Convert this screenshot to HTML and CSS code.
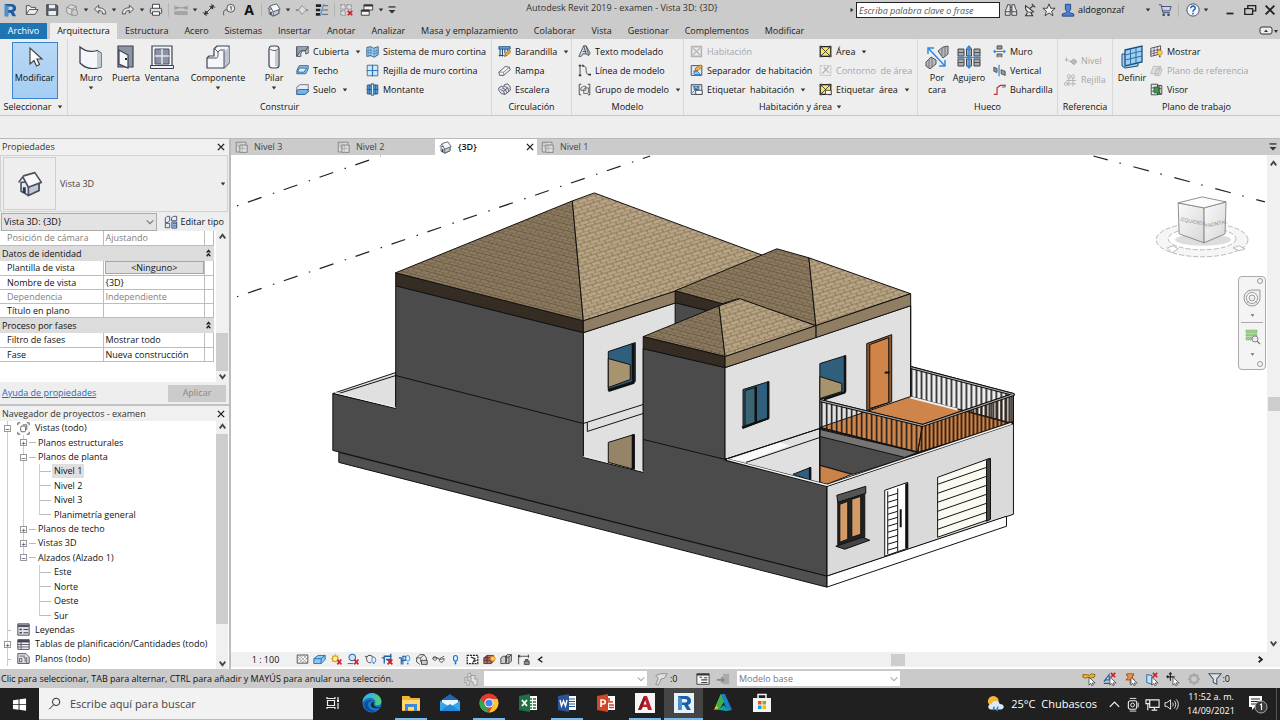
FILE: index.html
```html
<!DOCTYPE html>
<html lang="es">
<head>
<meta charset="utf-8">
<title>Autodesk Revit 2019 - examen - Vista 3D: {3D}</title>
<link rel="stylesheet" href="styles.css">
</head>
<body>
<svg class="sprites" aria-hidden="true">
  <defs>
    <symbol id="logo-r" viewBox="0 0 16 16"><path d="M2 1h7c4 0 6 2 6 5 0 2-1 3.500-3 4l3 5h-4L8.500 11H6v4H2z" fill="#1b5ea6"/><path d="M6 4h3c3 0 3 4 0 4H6z" fill="#cbcbcb"/><path d="M2 1l4 3v11H2z" fill="#4a8fd0"/></symbol>
    <symbol id="open" viewBox="0 0 16 16"><path d="M1.500 13V3h4l1.500 2h5v2.500M1.500 13L5 7.500h10L11.500 13z" fill="#eee" stroke="#444"/></symbol>
    <symbol id="save" viewBox="0 0 16 16"><path d="M2 2h11l1.500 1.500V14H2z" fill="#5a6472" stroke="#333"/><path d="M4.500 2h7v4h-7zM4 9h8.500v5H4z" fill="#eee"/></symbol>
    <symbol id="cube" viewBox="0 0 16 16"><path d="M2 5l5-3 6 2v7l-5 3-6-3z" fill="#ddd" stroke="#888"/><path d="M2 5l6 2 5-3M8 7v7" fill="none" stroke="#888"/><circle cx="11" cy="11" r="3.500" fill="#ccc" stroke="#888"/></symbol>
    <symbol id="undo" viewBox="0 0 16 16"><path d="M1.500 7L6.500 2.500v3c5 0 8 2 8 7H11c0-3-1.500-4-4.500-4v3z" fill="#e6e6e6" stroke="#444"/></symbol>
    <symbol id="redo" viewBox="0 0 16 16"><path d="M14.500 7L9.500 2.500v3c-5 0-8 2-8 7H5c0-3 1.500-4 4.500-4v3z" fill="#e6e6e6" stroke="#444"/></symbol>
    <symbol id="print" viewBox="0 0 16 16"><path d="M4 6V1.500h8V6" fill="#fff" stroke="#333"/><rect x="1.500" y="6" width="13" height="6" rx="1.500" fill="#dde" stroke="#333"/><path d="M4 10h8v4H4z" fill="#fff" stroke="#333"/></symbol>
    <symbol id="measure" viewBox="0 0 16 16"><path d="M1 3v5M15 3v5M2 5.500h12M4 4L2 5.500 4 7M12 4l2 1.500L12 7" fill="none" stroke="#888"/><path d="M1 10h14v3H1z" fill="#aaa" stroke="#999"/></symbol>
    <symbol id="dim" viewBox="0 0 16 16"><path d="M3 13L13 3M1 10.500L5.500 15M10.500 1L15 5.500M3 13l1-4 3 3zM13 3l-1 4-3-3z" fill="#333" stroke="#333"/></symbol>
    <symbol id="tag" viewBox="0 0 16 16"><circle cx="10" cy="6" r="4.500" fill="#eee" stroke="#444"/><path d="M2 14c-1-5 1-7 3.500-6M9 5l1.500-1v4.500" fill="none" stroke="#444"/></symbol>
    <symbol id="house" viewBox="0 0 16 16"><path d="M2.500 7v5.500L7 15l6.500-3V6z" fill="#e8ebf2" stroke="#4a5260"/><path d="M7 9.500V15l6.500-3V7z" fill="#c3c9d6" stroke="#4a5260"/><path d="M1 7l3-4 7-2 4 6-8 3-3.500-6.500" fill="#f8f8fb" stroke="#4a5260" stroke-linejoin="round"/><path d="M4.500 10v3.500" stroke="#2c3644" stroke-width="1.800"/></symbol>
    <symbol id="section" viewBox="0 0 16 16"><path d="M1 8h3M12 8h3" stroke="#888" stroke-width="2"/><path d="M8 3l5 5-5 5-4-5z" fill="#ddd" stroke="#888"/></symbol>
    <symbol id="thin" viewBox="0 0 16 16"><path d="M1 3h6M1 8h5M1 13h5" stroke="#222" stroke-width="3"/><path d="M9 3h6M8 8h7M8 13h7" stroke="#555"/><path d="M10 1L6 15" stroke="#4b9be0" stroke-width="1.500"/></symbol>
    <symbol id="closewin" viewBox="0 0 16 16"><path d="M1 2h5v5H1zM8 2h5v5H8zM1 9h5v5H1z" fill="#ddd" stroke="#777" stroke-dasharray="2 1"/><path d="M9 9l5 5M14 9l-5 5" stroke="#c8202c" stroke-width="2"/></symbol>
    <symbol id="switch" viewBox="0 0 16 16"><path d="M4.500 2h10v6h-10zM1.500 8h9v6h-9z" fill="#f4f4f4" stroke="#333"/><path d="M4.500 3h10M1.500 9h9" stroke="#333" stroke-width="2"/></symbol>
    <symbol id="custom" viewBox="0 0 16 16"><path d="M4 4.500h8" stroke="#333" stroke-width="1.500"/><path d="M4 8h8l-4 4z" fill="#333"/></symbol>
    <symbol id="tri" viewBox="0 0 8 8"><path d="M1 2h6L4 6z" fill="#333"/></symbol>
    <symbol id="binoc" viewBox="0 0 16 16"><path d="M3 6l1-4h3v12H1.500V9zM13 6l-1-4H9v12h5.500V9z" fill="#e4e8ee" stroke="#333"/><path d="M7 5h2M7 8h2M2 10h5M9 10h5" stroke="#333"/></symbol>
    <symbol id="dish" viewBox="0 0 16 16"><path d="M3 3c-1 6 3 9 9 7z" fill="#f4f4f4" stroke="#333" stroke-width="1.200"/><path d="M8 6l4-3M10 1l4 4M5 11l-2 3.500h8L9 11" fill="#ddd" stroke="#333" stroke-width="1.200"/></symbol>
    <symbol id="star" viewBox="0 0 16 16"><path d="M8 1l2 5h5l-4 3.500 1.500 5L8 11.500l-4.500 3 1.500-5L1 6h5z" fill="#eee" stroke="#333"/></symbol>
    <symbol id="user" viewBox="0 0 16 16"><path d="M5 1.500h6v6L9.500 9.500v1.500l5 1.500V15h-13v-2.500l5-1.500V9.500L5 7.500z" fill="#4c83d8" stroke="#1f3f7c"/></symbol>
    <symbol id="cart" viewBox="0 0 16 16"><path d="M1 2h2.500l2 9h8M4 4h11l-1.500 5H5" fill="#c3d2ee" stroke="#3a4668"/><circle cx="6.500" cy="13.500" r="1.500" fill="#3a4668"/><circle cx="12" cy="13.500" r="1.500" fill="#3a4668"/></symbol>
    <symbol id="help" viewBox="0 0 16 16"><circle cx="8" cy="8" r="7" fill="#f4f8ff" stroke="#33435c"/><path d="M5.500 6c0-3.500 5-3 5 0 0 1.500-2.500 1.500-2.500 4M8 11v2" fill="none" stroke="#2c66b8" stroke-width="1.800"/></symbol>
    <symbol id="min" viewBox="0 0 16 16"><path d="M4 12h8" stroke="#222" stroke-width="2"/></symbol>
    <symbol id="restore" viewBox="0 0 16 16"><path d="M5.500 6V3h9v6h-3M2 6.500h9V13H2z" fill="none" stroke="#222" stroke-width="1.500"/></symbol>
    <symbol id="x" viewBox="0 0 16 16"><path d="M3 3l10 10M13 3L3 13" stroke="#222" stroke-width="2.200"/></symbol>
    <symbol id="ribmin" viewBox="0 0 20 12"><rect x="1" y="2" width="12" height="7" rx="2" fill="#eee" stroke="#333"/><path d="M5 7l2-2.500L9 7z" fill="#333"/><path d="M15 5h4l-2 3z" fill="#333"/></symbol>
    <symbol id="chevdn" viewBox="0 0 12 12"><path d="M2 4l4 4 4-4" fill="none" stroke="#777" stroke-width="1.300"/></symbol>

    <symbol id="cursor" viewBox="0 0 24 24"><path d="M7 3v16l4-3.500 2.500 5.500 3-1.500L14 14h5z" fill="#fff" stroke="#444" stroke-width="1.200"/></symbol>
    <symbol id="muro" viewBox="0 0 24 24"><path d="M1 2c6 5 12 5 17 3.500L22 8v14c-8 3-15 2-21-4z" fill="#f5f6f9" stroke="#3c434f" stroke-width="1.300"/><path d="M18 6v17l4-1V8z" fill="#c4c9d3"/></symbol>
    <symbol id="puerta" viewBox="0 0 24 24"><path d="M4 1h15v21H4z" fill="#8e96a6" stroke="#3c434f" stroke-width="1.200"/><path d="M5 5l9 5v13l-9-4z" fill="#f5f6f9" stroke="#3c434f" stroke-width="1.200"/><path d="M11 14h2" stroke="#222" stroke-width="2"/></symbol>
    <symbol id="ventana" viewBox="0 0 24 24"><path d="M2 1h20v20H2z" fill="#f5f6f9" stroke="#3c434f" stroke-width="1.200"/><path d="M5 4h14v15H5z" fill="#8b93a6" stroke="#4c5360"/><path d="M12 4v15M5 11h14" stroke="#e5e7ec" stroke-width="1.500"/><path d="M.5 20.500h23v3H.5z" fill="#f0f1f4" stroke="#3c434f"/></symbol>
    <symbol id="comp" viewBox="0 0 24 24"><path d="M1 13l2-2h5V4l3-3h12v17l-5 5H1z" fill="#f5f6f9" stroke="#3c434f" stroke-width="1.200" stroke-linejoin="round"/><path d="M18 7l5-5v16l-5 5z" fill="#bfc5d0"/><path d="M1 13h9c2 0 2-2 2-6l2-2h5M18 6v17M12 7L9 4" fill="none" stroke="#4c5360"/></symbol>
    <symbol id="pilar" viewBox="0 0 24 24"><rect x="7" y="1" width="10" height="22" rx="3" fill="#f5f6f9" stroke="#3c434f" stroke-width="1.200"/><path d="M14.500 5v16" stroke="#c4c9d3" stroke-width="3"/><path d="M8 4c2 2 6 2 8 0" fill="none" stroke="#666"/></symbol>
    <symbol id="cubierta" viewBox="0 0 16 16"><path d="M1 2h14v8l-3 1V7H8l-2 3v4H1z" fill="#d2d6df" stroke="#333d4a"/><path d="M1 2v12l5-7h6l3-5" fill="#97a0b0" stroke="#333d4a"/></symbol>
    <symbol id="techo" viewBox="0 0 16 16"><path d="M4 2h11v4l-3 6H1V8z" fill="#8ac3ed" stroke="#24588a"/><path d="M4 5h9l-3 5H2z" fill="#d9eefb" stroke="#24588a"/></symbol>
    <symbol id="suelo" viewBox="0 0 16 16"><path d="M1 5l4-3h10v8l-4 4H1z" fill="#e9edf3" stroke="#5c636f"/><path d="M1 9l3-1h11v3l-4 3H1z" fill="#74b6e8" stroke="#24588a"/></symbol>
    <symbol id="sistema" viewBox="0 0 16 16"><path d="M1 3l5-1 3 2 6-2v10l-5 3-4-2-5 1z" fill="#b3daf5" stroke="#1d4c7c"/><path d="M1 7l5-1 4 2 5-2M1 10l5-1 4 2 5-2M6 2v12M10 4v11M3.500 3v11M12.500 4v9" fill="none" stroke="#3a72aa" stroke-width=".8"/></symbol>
    <symbol id="rejilla" viewBox="0 0 16 16"><path d="M1.500 1.500h13v13h-13z" fill="#cfe8fa" stroke="#44566c"/><path d="M8 1v14M1 8h14" stroke="#2c77bd" stroke-width="1.500"/></symbol>
    <symbol id="montante" viewBox="0 0 16 16"><path d="M1.500 2.500h13v11h-13z" fill="#5fa9e4" stroke="#1d4c7c"/><path d="M1 8h14M4 2v12M12 2v12" stroke="#1d4c7c"/><path d="M6.500 1h3v14h-3z" fill="#dceefa" stroke="#1d3c5c"/></symbol>
    <symbol id="baranda" viewBox="0 0 16 16"><path d="M1 2h14v3H1z" fill="#5fa8df" stroke="#1d4c7c"/><path d="M2.500 5v9M5.500 5v9M8.500 5v5M11.500 5v2M1 13h6" stroke="#1d4c7c" stroke-width="1.300"/><path d="M8 14l1-3 5-5 2 2-5 5z" fill="#f2b632" stroke="#8a4b12"/></symbol>
    <symbol id="rampa" viewBox="0 0 16 16"><path d="M1 10l8-7 5 1 1 3-8 7H2z" fill="#f4f5f8" stroke="#3c434f"/><path d="M14 4l-7 6v4M7 10L1 10" fill="none" stroke="#777"/></symbol>
    <symbol id="escalera" viewBox="0 0 16 16"><path d="M1 6l3-2 3 1 1-3 4-1 3 4v4l-6 5-5-1-3-4z" fill="#e6e8ee" stroke="#3c434f"/><path d="M3 8l4 2 1 4M5 6l4 2 2 4M8 4l4 2 1 4M7 10l2-2M9 8l3-2" fill="none" stroke="#3c434f"/></symbol>
    <symbol id="texto" viewBox="0 0 16 16"><path d="M1 14L7 1h3l5 9-2 3-3-2H6l-2 3z" fill="#cfd4de" stroke="#3c434f"/><path d="M7 1l3 10M6 8h4M10 1l3 11" fill="none" stroke="#3c434f"/></symbol>
    <symbol id="linea" viewBox="0 0 16 16"><path d="M2.500 3v11M6 3c4-1 4 2 4 5s1 5 4 5" fill="none" stroke="#333"/><path d="M1 2h3M1 14h3M5 2h2M13 13h3" stroke="#333" stroke-width="2"/></symbol>
    <symbol id="grupo" viewBox="0 0 16 16"><path d="M4 1.500H1.500v13H4M12 1.500h2.500v13H12" fill="none" stroke="#333"/><path d="M3.500 6l3-2h3v5h-6zM7 8l2-2h4v6l-2 1H7z" fill="#e5e7ed" stroke="#555"/></symbol>
    <symbol id="habit" viewBox="0 0 16 16"><path d="M2 2h12v12H2z" fill="#eee" stroke="#b4b4b4" stroke-width="2"/><path d="M4 4l8 8M12 4l-8 8" stroke="#b4b4b4" stroke-width="1.500"/></symbol>
    <symbol id="separ" viewBox="0 0 16 16"><path d="M1.500 2h13v12h-13z" fill="#dfe9f2" stroke="#26364a"/><path d="M4 12l8-8M4 9h5l4 4H5" stroke="#3b83c4" stroke-width="1.200" fill="#8cc6f0"/><path d="M6 8l1-3 6-4 2 2-5 5z" fill="#f2b632" stroke="#8a4b12" stroke-width=".8"/></symbol>
    <symbol id="etiq" viewBox="0 0 16 16"><path d="M1.500 2h13v12h-13z" fill="#dfe9f2" stroke="#26364a"/><path d="M3 3l9 9M12 3l-9 9M5 4h6v4H5z" stroke="#3b5c84" fill="#8cc6f0"/><path d="M7 9h8v5H7z" fill="#fff" stroke="#333"/></symbol>
    <symbol id="area" viewBox="0 0 16 16"><path d="M1.500 2h13v12h-13z" fill="#f8e36a" stroke="#222" stroke-width="1.500"/><path d="M2 2l12 12M14 2L2 14" stroke="#333"/><path d="M1 1h3v3H1zM12 1h3v3h-3zM1 12h3v3H1zM12 12h3v3h-3z" fill="#444"/></symbol>
    <symbol id="contorno" viewBox="0 0 16 16"><path d="M1.500 2h13v12h-13z" fill="#eee" stroke="#b4b4b4" stroke-dasharray="3 1"/><path d="M4 12l8-9M6 4l6 7" stroke="#b4b4b4" stroke-width="1.500"/></symbol>
    <symbol id="etarea" viewBox="0 0 16 16"><use href="#area"/><path d="M8 9h7v5H8z" fill="#fff" stroke="#333"/></symbol>
    <symbol id="porcara" viewBox="0 0 24 24"><path d="M1 17l5-5 5 3v4l-6 5-4-3zM13 6l5-4 5-1v8l-5 4z" fill="#b6b9bf" stroke="#555"/><path d="M4 14v9M7 13v9M17 3v8M20 2v9" stroke="#777"/><path d="M4 4l15 16M3 9V3h6M20 15v6h-6" fill="none" stroke="#2f8ade" stroke-width="1.500"/></symbol>
    <symbol id="agujero" viewBox="0 0 24 24"><path d="M1 4h6v7H1zM9.500 4h5v7h-5zM17 4h6v7h-6zM1 14h6v7H1zM9.500 14h5v7h-5zM17 14h6v7h-6z" fill="#a9acb2" stroke="#444"/><path d="M1 7.500h6M17 7.500h6M1 17.500h6M17 17.500h6" stroke="#555"/><path d="M0 12.500h24M12 1v22M9.500 4L12 1l2.500 3M9.500 20l2.500 3 2.500-3" fill="none" stroke="#2f8ade" stroke-width="1.300"/></symbol>
    <symbol id="hmuro" viewBox="0 0 16 16"><path d="M5 1h6v4H5zM5 15v-4h6v4" fill="#999" stroke="#444"/><path d="M1 8h14M3 6L1 8l2 2M13 6l2 2-2 2" fill="none" stroke="#2f8ade" stroke-width="1.300"/></symbol>
    <symbol id="hvert" viewBox="0 0 16 16"><path d="M1 4l4 1.500v5L1 9zM10 7l5 2v5l-5-2z" fill="#999" stroke="#444"/><path d="M7.500 1v14" stroke="#2f8ade" stroke-width="1.500"/></symbol>
    <symbol id="buhard" viewBox="0 0 16 16"><path d="M1 14h4V6l4-3h6" fill="none" stroke="#c2303c" stroke-width="1.500"/><path d="M11 5h4V2" fill="none" stroke="#555"/></symbol>
    <symbol id="nivel" viewBox="0 0 16 16"><path d="M1 6h5M3 3v5M6 8h3" stroke="#aaa"/><path d="M8 8l4-3 4 3-4 4z" fill="#bbb" stroke="#999"/></symbol>
    <symbol id="rejref" viewBox="0 0 16 16"><path d="M6 4v11M11 4v11M3 8h12M3 12h12" stroke="#aaa"/><circle cx="6" cy="3" r="2" fill="none" stroke="#aaa"/><circle cx="11" cy="3" r="2" fill="none" stroke="#aaa"/><circle cx="2.500" cy="12" r="2" fill="none" stroke="#aaa"/></symbol>
    <symbol id="definir" viewBox="0 0 24 24"><path d="M5 9H2v12l3 2 13-2v-3" fill="#9fd0f2" stroke="#1d4c7c"/><path d="M5 5l17-4v16L5 21z" fill="#9fd0f2" stroke="#1d4c7c" stroke-width="1.300"/><path d="M5 10l17-4M5 15l17-4M10.500 4v16M16 3v15" stroke="#2f6da6"/></symbol>
    <symbol id="mostrar" viewBox="0 0 16 16"><path d="M1 4l12-3v10L1 14z" fill="#eef" stroke="#333"/><path d="M1 8l12-3M1 11l12-3M5 3v10M9 2v10" stroke="#333" stroke-width=".8"/><circle cx="12" cy="9.500" r="3" fill="#ffd24a" stroke="#c68a10"/><path d="M11 13h2v2h-2z" fill="#555"/></symbol>
    <symbol id="planoref" viewBox="0 0 16 16"><path d="M4 3h9l-3 9H1zM7 8l7-5M8 6h7l-3 8H6z" fill="#ddd" stroke="#b4b4b4"/></symbol>
    <symbol id="visor" viewBox="0 0 16 16"><path d="M1.500 1.500h8v13h-8zM9.500 3h5v11h-5z" fill="#e5e7ea" stroke="#333"/><path d="M2 6h3M2 10h3M12 3v11M10 7h4" stroke="#444"/><path d="M5 5h6v6l2 2-6-1H5z" fill="#3d9b48" stroke="#1c5a26"/></symbol>

    <symbol id="planview" viewBox="0 0 16 16"><path d="M1.500 1.500h12v3M1.500 1.500v12h4M6 5h9v9H6z" fill="#ddd" stroke="#777"/><path d="M9 6v7M7 9h7M3 6h2" stroke="#999" stroke-dasharray="2 1"/></symbol>
    <symbol id="edit" viewBox="0 0 16 16"><path d="M1.500 3.500l2-2h3v5l-2 2h-3zM8.500 3.500l2-2h4v5h-6zM1.500 9.500h5v5h-5z" fill="#e8ecf4" stroke="#3a4a66"/><path d="M9 8h5.500v7H9zM10 10h4M10 12.500h4" fill="#b8d8f4" stroke="#2d4468"/></symbol>
    <symbol id="up" viewBox="0 0 12 12"><path d="M3 8l3-4 3 4" fill="none" stroke="#444" stroke-width="2"/></symbol>
    <symbol id="down" viewBox="0 0 12 12"><path d="M3 4l3 4 3-4" fill="none" stroke="#444" stroke-width="2"/></symbol>
    <symbol id="dbl" viewBox="0 0 12 12"><path d="M4 5l2-2.500L8 5M4 9l2-2.500L8 9" fill="none" stroke="#222" stroke-width="1.500"/></symbol>
    <symbol id="views" viewBox="0 0 16 16"><path d="M1 4V1h3M12 1h3v3M15 12v3h-3M4 15H1v-3" fill="none" stroke="#333"/><rect x="4.500" y="5" width="6" height="7" rx="1.500" fill="#fff" stroke="#444"/><path d="M7 3.500h5v6" fill="none" stroke="#444"/></symbol>
    <symbol id="leyenda" viewBox="0 0 16 16"><path d="M1 1h14v14H1z" fill="#dfe2e8" stroke="#333"/><path d="M1 3.500h14" stroke="#556" stroke-width="3"/><path d="M3 7h3v2H3zM3 11h3v2H3z" fill="#445"/><path d="M8 8h6M8 12h6" stroke="#445" stroke-width="1.500"/></symbol>
    <symbol id="tabla" viewBox="0 0 16 16"><path d="M1 2h14v12H1z" fill="#f4f4f6" stroke="#333"/><path d="M1 4h14" stroke="#445" stroke-width="3"/><path d="M1 8h14M1 11h14M5 2v12" stroke="#445"/></symbol>
    <symbol id="plano" viewBox="0 0 16 16"><path d="M1 2h10l4 4v8H1z" fill="#e6e8ec" stroke="#333"/><path d="M3 5h7M3 8h3v4H3zM8 7h2v5M12 6v8" fill="none" stroke="#445"/></symbol>

    <symbol id="detail" viewBox="0 0 16 16"><path d="M1.500 2.500h13v10h-13z" fill="#fff" stroke="#333"/><path d="M2 6l3-3M2 10l7-7M4 12l9-9M8 12l6-6M12 12l2-2M4 3l9 9M2 5l7 7M9 3l5 5" stroke="#888" stroke-width=".8"/></symbol>
    <symbol id="style" viewBox="0 0 16 16"><path d="M1 7l5-4h9v5l-5 5H1z" fill="#8cc9f5" stroke="#1d5fa0"/><path d="M1 7h9l5-4M10 7v6" fill="none" stroke="#1d5fa0"/></symbol>
    <symbol id="sun" viewBox="0 0 16 16"><circle cx="6.500" cy="7" r="3.500" fill="#fff3a8" stroke="#e19b14" stroke-width="1.500"/><path d="M6.500 1v2M1 7h2M2.500 3l1.500 1.500M2.500 11L4 9.500M10.500 3L9 4.500" stroke="#e19b14"/><path d="M9 8l5 6M14 8l-5 6" stroke="#c8202c" stroke-width="2"/></symbol>
    <symbol id="shadow" viewBox="0 0 16 16"><circle cx="6.500" cy="5.500" r="4" fill="#cfe6fa" stroke="#2a6bb0" stroke-width="1.300"/><path d="M1 13h7" stroke="#445"/><path d="M9 8l5 6M14 8l-5 6" stroke="#c8202c" stroke-width="2"/></symbol>
    <symbol id="render" viewBox="0 0 16 16"><path d="M1 4l3 1 1-2h4l1 2h2M3 5c0 6 2 7 6 7" fill="#eee" stroke="#333"/><ellipse cx="12" cy="8.500" rx="2.500" ry="3.500" fill="#dff0ff" stroke="#2a7bd0"/><path d="M11 13h2" stroke="#2a7bd0"/></symbol>
    <symbol id="crop" viewBox="0 0 16 16"><path d="M1 6h3v7M4 13V4h9M6 8h5v5M12 1v12" fill="none" stroke="#1d5fa0" stroke-width="1.600"/><path d="M8 8l6 6M14 8l-6 6" stroke="#c8202c" stroke-width="2"/></symbol>
    <symbol id="cropb" viewBox="0 0 16 16"><path d="M1 6h3v8M4 9h5V4H6v10" fill="none" stroke="#1d5fa0" stroke-width="1.400"/><ellipse cx="12" cy="6.500" rx="2.500" ry="3.500" fill="#dff0ff" stroke="#2a7bd0"/><path d="M11 12h2v2h-2z" fill="#2a7bd0"/></symbol>
    <symbol id="lock" viewBox="0 0 16 16"><path d="M2 6l4-4h5l3 4v4M2 6v5l4 3" fill="#eee" stroke="#333"/><path d="M2 6h5l4-4M7 6v5" fill="none" stroke="#444"/><path d="M8 9h7v5H8z" fill="#c7d6c7" stroke="#333"/></symbol>
    <symbol id="glasses" viewBox="0 0 16 16"><path d="M1 6c2-2 3-2 5 0M9 8c2-3 3-2 6-4M6 6l3 1" fill="none" stroke="#333"/><path d="M1 6c0 4 5 4 5 0zM9 8c0 5 6 4 6-1z" fill="#fff" stroke="#333"/></symbol>
    <symbol id="bulb" viewBox="0 0 16 16"><ellipse cx="8" cy="6.500" rx="2.500" ry="3.500" fill="#e6f4ff" stroke="#1670cc" stroke-width="1.300"/><path d="M7 11h2v3H7z" fill="#1670cc"/></symbol>
    <symbol id="tempv" viewBox="0 0 16 16"><path d="M1.500 3h13v10h-13z" fill="#fff" stroke="#222" stroke-width="1.500" stroke-dasharray="2.500 1"/><path d="M6 5l5 2-2 4 4-2" fill="none" stroke="#333" stroke-width="1.500"/></symbol>
    <symbol id="analytic" viewBox="0 0 16 16"><path d="M1 6l4-3h8v7l-3 3H1z" fill="#c66" stroke="#333"/><path d="M1 6h9v7M5 3v10M1 9h9" fill="none" stroke="#333"/><circle cx="12" cy="7" r="3" fill="#ffc94a" stroke="#c68a10"/></symbol>
    <symbol id="displace" viewBox="0 0 16 16"><path d="M1 6l3-2h4v7l-2 2H1zM7 4l2-2h5v8l-3 3H7z" fill="#ccc" stroke="#333"/><path d="M7 5h4v8M11 5l3-3" fill="none" stroke="#333"/></symbol>
    <symbol id="constr" viewBox="0 0 16 16"><path d="M2 2v12M1 4h14M14 2v4M4 2.500L2 4l2 1.500" stroke="#333" fill="none"/><path d="M9 10h6v4H9zM10.500 10V8h3v2" fill="#999" stroke="#333"/></symbol>
    <symbol id="left" viewBox="0 0 12 12"><path d="M8 3L4 6l4 3" fill="none" stroke="#222" stroke-width="1.700"/></symbol>
    <symbol id="right" viewBox="0 0 12 12"><path d="M4 3l3.500 3L4 9" fill="none" stroke="#222" stroke-width="2"/></symbol>

    <symbol id="works" viewBox="0 0 16 16"><path d="M1 6h3l-1 4h3v5H3v-3H1zM8 4h5l-1 4h3v7h-4l-1-4H8zM4 3l3-2 1 3-3 2z" fill="#e2e2e2" stroke="#999"/></symbol>
    <symbol id="pick" viewBox="0 0 16 16"><path d="M2 4l6-2h7l-3 5-4 1-3 7-3-1 3-7z" fill="#e2e2e2" stroke="#888"/></symbol>
    <symbol id="opts" viewBox="0 0 16 16"><path d="M1 2h14v12H1z" fill="#f6f7f9" stroke="#333"/><path d="M1 3h14" stroke="#333" stroke-width="2"/><path d="M4 6h3M9 6.500h4M6 9h7M6 12h7" stroke="#444" stroke-width="1.200"/></symbol>
    <symbol id="addset" viewBox="0 0 16 16"><path d="M8 2h7v12H8z" fill="#aaa"/><path d="M1 9h8M6 6l3 3-3 3" stroke="#888" stroke-width="2" fill="none"/></symbol>
    <symbol id="ptr" viewBox="0 0 16 16"><path d="M8 6v9l2-2 1.500 3 1.500-1-1.500-2.500H15z" fill="#fff" stroke="#333" stroke-width=".8"/></symbol>
    <symbol id="sel1" viewBox="0 0 16 16"><path d="M1 3h5l2 1 3-2 4 1-1 3-4 1-3-1-3 1-3-1z" fill="#e9b52c" stroke="#8a6410"/><use href="#ptr"/></symbol>
    <symbol id="sel2" viewBox="0 0 16 16"><path d="M1 11l6-8v6H3zM1 13h8" fill="#dff" stroke="#1d5fa0" stroke-width="1.300"/><path d="M9 1l5 5M14 1L9 6" stroke="#c8202c" stroke-width="1.800"/><use href="#ptr"/></symbol>
    <symbol id="sel3" viewBox="0 0 16 16"><path d="M3 2h8v2H9.500v3l2.500 2H2l2.500-2V4H3zM7 9v5" fill="#f09a50" stroke="#a04c14"/><use href="#ptr"/></symbol>
    <symbol id="sel4" viewBox="0 0 16 16"><path d="M2 3l6 1v10l-6-2z" fill="#bfe0fa" stroke="#1d5fa0"/><path d="M9 1l5 5M14 1L9 6" stroke="#c8202c" stroke-width="1.800"/><use href="#ptr"/></symbol>
    <symbol id="sel5" viewBox="0 0 16 16"><path d="M5 1v9M1 5.500h9M3.500 2.500L5 1l1.500 1.500M2.500 4L1 5.500 2.500 7" stroke="#222" stroke-width="1.300" fill="none"/><use href="#ptr"/></symbol>
    <symbol id="gear" viewBox="0 0 16 16"><circle cx="8" cy="8" r="4.500" fill="none" stroke="#a6a6a6" stroke-width="2.500"/><path d="M8 1v3M8 12v3M1 8h3M12 8h3M3 3l2 2M11 11l2 2M13 3l-2 2M5 11l-2 2" stroke="#a6a6a6" stroke-width="1.500"/></symbol>
    <symbol id="funnel" viewBox="0 0 16 16"><path d="M1 2h14L10 8v6l-4-2V8z" fill="#dde4ee" stroke="#44546a" stroke-width="1.200"/></symbol>

    <symbol id="win" viewBox="0 0 16 16"><path d="M1 3.500l6-.8v5H1zM8 2.500l7-1v6.200H8zM1 8.500h6v5l-6-.8zM8 8.500h7v6.200l-7-1z" fill="#fff"/></symbol>
    <symbol id="lupa" viewBox="0 0 16 16"><circle cx="10" cy="6" r="4.500" fill="none" stroke="#222" stroke-width="1.200"/><path d="M7 9.500L1.500 15" stroke="#222" stroke-width="1.200"/></symbol>
    <symbol id="taskview" viewBox="0 0 16 16"><path d="M2.500 5.500h7v5h-7zM2 2v1.500h8V2M2 14v-1.500h8V14M13 2v3M13 8v6" fill="none" stroke="#eee" stroke-width="1.200"/><path d="M12 5h2v2h-2z" fill="#eee"/></symbol>
    <symbol id="edge" viewBox="0 0 20 20"><circle cx="10" cy="10" r="9.500" fill="#1878c8"/><path d="M.5 9C2-2 18-2 19.500 8c0 4-3 5-6 4-1-1 0-1 0-3C13 4 4 3 .5 9z" fill="#4bc988"/><path d="M.5 9C2 0 11-2 15 2c0 2-11 0-14.500 7z" fill="#35b6e6"/><path d="M6 10c-1 5 4 9 10 7-6 4-14 1-14-6 1-5 9-5 11-2-3-2-6-1-7 1z" fill="#0c4fa0"/><path d="M12 9c-2 4 2 6 7 5-2 2-10 2-10-2 0-2 1-3 3-3z" fill="#202020"/></symbol>
    <symbol id="folder" viewBox="0 0 20 20"><path d="M1 3h7l2 2h9v13H1z" fill="#f1b52e"/><path d="M1 7h18v10H1z" fill="#ffd970"/><path d="M4 11h12v7h-3v-4H7v4H4z" fill="#3c8bd4"/></symbol>
    <symbol id="mail" viewBox="0 0 20 20"><path d="M0 8l10-7 10 7v10H0z" fill="#1a67b8"/><path d="M2 7h16v6H2z" fill="#eef6fd"/><path d="M0 8l10 6 10-6v10H0z" fill="#35a6ee"/><path d="M0 18l10-7 10 7z" fill="#2288d8"/></symbol>
    <symbol id="chrome" viewBox="0 0 20 20"><circle cx="10" cy="10" r="9.500" fill="#e33b2e"/><path d="M1.500 5.500L7 14l3 5.500C3 19.500-2 12 1.500 5.500z" fill="#2da94f"/><path d="M10 19.500L14.500 12 13 6h5.500c3 6-1.500 13.500-8.500 13.500z" fill="#fdc928"/><circle cx="10" cy="10" r="4.600" fill="#fff"/><circle cx="10" cy="10" r="3.600" fill="#4285f4"/></symbol>
    <symbol id="excel" viewBox="0 0 20 20"><path d="M10 3h9v14h-9z" fill="#fff"/><path d="M12 6h2M15 6h3M12 9h2M15 9h3M12 12h2M15 12h3M12 15h2M15 15h3" stroke="#207245" stroke-width="1.500"/><path d="M1 3l11-2v18L1 17z" fill="#207245"/><path d="M4 7l5 6M9 7l-5 6" stroke="#fff" stroke-width="1.700"/></symbol>
    <symbol id="word" viewBox="0 0 20 20"><path d="M10 3h9v14h-9z" fill="#fff"/><path d="M12 6h6M12 8.500h6M12 11h6M12 13.500h6" stroke="#2a5699" stroke-width="1.200"/><path d="M1 3l11-2v18L1 17z" fill="#2a5699"/><path d="M3 7l1.500 6L6.500 8l2 5L10 7" fill="none" stroke="#fff" stroke-width="1.400"/></symbol>
    <symbol id="ppt" viewBox="0 0 20 20"><path d="M10 3h9v14h-9z" fill="#fff"/><path d="M13 5v4h4M13 12h5M13 14.500h5" fill="none" stroke="#d24726" stroke-width="1.700"/><path d="M1 3l11-2v18L1 17z" fill="#d24726"/><path d="M5 14V7h2c3 0 3 4 0 4H5" fill="none" stroke="#fff" stroke-width="1.600"/></symbol>
    <symbol id="acad" viewBox="0 0 20 20"><path d="M0 0h20v20H0z" fill="#f5f5f5"/><path d="M3 17L9 3h3l5 14h-4l-1-3H8l-2 3z" fill="#c21f2c"/><path d="M10 7l1.500 4.500h-3z" fill="#f5f5f5"/><path d="M3 17L9 3l1 4-4 10z" fill="#8c1420"/></symbol>
    <symbol id="revit" viewBox="0 0 20 20"><path d="M0 0h20v20H0z" fill="#e8f0f8"/><path d="M4 3h7c4 0 6 2 6 5 0 2-1 3-3 4l3 5h-4l-3-5H8v5H4z" fill="#1b5ea6"/><path d="M8 6h3c3 0 3 3.500 0 3.500H8z" fill="#e8f0f8"/><path d="M4 3l4 3v11H4z" fill="#4a8fd0"/></symbol>
    <symbol id="adesk" viewBox="0 0 20 20"><path d="M8 1L1 17l6-2 4-7z" fill="#f2c21a"/><path d="M8 1L3 12l3 4 5-7z" fill="#37b34a"/><path d="M8 1h4l7 16-6-2z" fill="#1d7fc4"/><path d="M1 17l6-2 4-3 2 3 6 2-6 1-6-1z" fill="#0fa0a8"/></symbol>
    <symbol id="store" viewBox="0 0 20 20"><path d="M1 5h18v14H1z" fill="#f5f5f5"/><path d="M6 5V1.500h8V5" fill="none" stroke="#f5f5f5" stroke-width="1.500"/><path d="M6 8h3.500v3.500H6z" fill="#f25022"/><path d="M10.500 8H14v3.500h-3.500z" fill="#7fba00"/><path d="M6 12.500h3.500V16H6z" fill="#00a4ef"/><path d="M10.500 12.500H14V16h-3.500z" fill="#ffb900"/></symbol>
    <symbol id="weather" viewBox="0 0 20 20"><circle cx="7" cy="7" r="6" fill="#f7b733"/><path d="M4 16c-4-1-3-6 1-6 1-5 9-4 9 0 6 0 6 6 1 6z" fill="#dceaf8"/><path d="M8 13l-1 4M12 13l-1 5" stroke="#2d82d8" stroke-width="1.800"/></symbol>
    <symbol id="chev" viewBox="0 0 16 16"><path d="M3 10.500l5-5 5 5" fill="none" stroke="#eee" stroke-width="1.400"/></symbol>
    <symbol id="meet" viewBox="0 0 16 16"><rect x="2.500" y="4" width="9" height="9" rx="2" fill="none" stroke="#eee" stroke-width="1.200"/><circle cx="7" cy="8.500" r="2" fill="none" stroke="#eee"/><path d="M4 1.500h7M4 15h7M13 6v5" stroke="#eee"/></symbol>
    <symbol id="net" viewBox="0 0 16 16"><path d="M5 3h10v8H5zM10 11v3M7 14h6M1 3h4v4H1zM3 7v7" fill="none" stroke="#eee" stroke-width="1.200"/></symbol>
    <symbol id="vol" viewBox="0 0 16 16"><path d="M1 6h2l4-3v10L3 10H1zM9 6c1 1 1 3 0 4M11 4c2 2 2 6 0 8M13 2.500c3 3 3 8 0 11" fill="none" stroke="#eee"/></symbol>
    <symbol id="notif" viewBox="0 0 20 20"><path d="M1 2h13v11H7l-3 3v-3H1z" fill="#fff"/><path d="M3 5h9M3 7.500h9M3 10h6" stroke="#222"/><circle cx="13" cy="13" r="6" fill="#3a3a3a" stroke="#aaa"/><path d="M12 11l1.500-1v6" fill="none" stroke="#fff" stroke-width="1.200"/></symbol>
  </defs>
</svg>

<div class="app">
  <header class="titlebar">
    <div class="qat">
      <svg class="logo"><use href="#logo-r"/></svg>
      <button class="q" aria-label="Abrir"><svg><use href="#open"/></svg></button>
      <button class="q" aria-label="Guardar"><svg><use href="#save"/></svg></button>
      <button class="q" aria-label="Sincronizar"><svg><use href="#cube"/></svg></button>
      <svg class="t"><use href="#tri"/></svg>
      <button class="q" aria-label="Deshacer"><svg><use href="#undo"/></svg></button>
      <svg class="t"><use href="#tri"/></svg>
      <button class="q" aria-label="Rehacer"><svg><use href="#redo"/></svg></button>
      <svg class="t"><use href="#tri"/></svg>
      <button class="q" aria-label="Imprimir"><svg><use href="#print"/></svg></button>
      <i class="sep"></i>
      <button class="q" aria-label="Medir"><svg><use href="#measure"/></svg></button>
      <svg class="t"><use href="#tri"/></svg>
      <button class="q" aria-label="Cota alineada"><svg><use href="#dim"/></svg></button>
      <button class="q" aria-label="Etiquetar"><svg><use href="#tag"/></svg></button>
      <button class="q big-a">A</button>
      <i class="sep"></i>
      <button class="q" aria-label="Vista 3D"><svg><use href="#house"/></svg></button>
      <svg class="t"><use href="#tri"/></svg>
      <button class="q" aria-label="Sección"><svg><use href="#section"/></svg></button>
      <button class="q" aria-label="Líneas finas"><svg><use href="#thin"/></svg></button>
      <i class="sep"></i>
      <button class="q" aria-label="Cerrar ventanas"><svg><use href="#closewin"/></svg></button>
      <button class="q" aria-label="Cambiar ventanas"><svg><use href="#switch"/></svg></button>
      <svg class="t"><use href="#tri"/></svg>
      <button class="q narrow" aria-label="Personalizar"><svg><use href="#custom"/></svg></button>
    </div>
    <h1 class="title">Autodesk Revit 2019 - examen - Vista 3D: {3D}</h1>
    <div class="infocenter">
      <svg class="t side"><use href="#tri"/></svg>
      <input class="search" type="text" aria-label="Buscar" placeholder="Escriba palabra clave o frase">
      <button class="q" aria-label="Buscar"><svg><use href="#binoc"/></svg></button>
      <button class="q" aria-label="Comunicación"><svg><use href="#dish"/></svg></button>
      <button class="q" aria-label="Favoritos"><svg><use href="#star"/></svg></button>
      <button class="account"><svg><use href="#user"/></svg><span>aldogonzaf</span><svg class="t"><use href="#tri"/></svg></button>
      <button class="q" aria-label="Tienda"><svg><use href="#cart"/></svg></button>
      <i class="sep"></i>
      <button class="q" aria-label="Ayuda"><svg><use href="#help"/></svg></button>
      <svg class="t"><use href="#tri"/></svg>
    </div>
    <div class="winbtns">
      <button class="q" aria-label="Minimizar"><svg><use href="#min"/></svg></button>
      <button class="q" aria-label="Restaurar"><svg><use href="#restore"/></svg></button>
      <button class="q" aria-label="Cerrar"><svg><use href="#x"/></svg></button>
    </div>
  </header>

  <nav class="tabs">
    <button class="file">Archivo</button>
    <button class="active">Arquitectura</button>
    <button>Estructura</button><button>Acero</button><button>Sistemas</button><button>Insertar</button><button>Anotar</button><button>Analizar</button><button>Masa y emplazamiento</button><button>Colaborar</button><button>Vista</button><button>Gestionar</button><button>Complementos</button><button>Modificar</button>
    <svg class="ribmin"><use href="#ribmin"/></svg>
  </nav>

  <section class="ribbon">
    <div class="panel p-sel">
      <div class="tools"><button class="lg selected"><svg><use href="#cursor"/></svg>Modificar</button></div>
      <div class="caption">Seleccionar <svg class="t"><use href="#tri"/></svg></div>
    </div>
    <div class="panel p-con">
      <div class="tools">
        <button class="lg w34"><svg><use href="#muro"/></svg>Muro<svg class="t"><use href="#tri"/></svg></button>
        <button class="lg w36"><svg><use href="#puerta"/></svg>Puerta</button>
        <button class="lg w36"><svg><use href="#ventana"/></svg>Ventana</button>
        <button class="lg w76"><svg><use href="#comp"/></svg>Componente<svg class="t"><use href="#tri"/></svg></button>
        <button class="lg w36"><svg><use href="#pilar"/></svg>Pilar<svg class="t"><use href="#tri"/></svg></button>
        <div class="col w70">
          <button class="sm"><svg><use href="#cubierta"/></svg>Cubierta<svg class="t"><use href="#tri"/></svg></button>
          <button class="sm"><svg><use href="#techo"/></svg>Techo</button>
          <button class="sm"><svg><use href="#suelo"/></svg>Suelo<svg class="t"><use href="#tri"/></svg></button>
        </div>
        <div class="col">
          <button class="sm"><svg><use href="#sistema"/></svg>Sistema de muro cortina</button>
          <button class="sm"><svg><use href="#rejilla"/></svg>Rejilla de muro cortina</button>
          <button class="sm"><svg><use href="#montante"/></svg>Montante</button>
        </div>
      </div>
      <div class="caption">Construir</div>
    </div>
    <div class="panel p-cir">
      <div class="tools"><div class="col">
        <button class="sm"><svg><use href="#baranda"/></svg>Barandilla<svg class="t"><use href="#tri"/></svg></button>
        <button class="sm"><svg><use href="#rampa"/></svg>Rampa</button>
        <button class="sm"><svg><use href="#escalera"/></svg>Escalera</button>
      </div></div>
      <div class="caption">Circulación</div>
    </div>
    <div class="panel p-mod">
      <div class="tools"><div class="col">
        <button class="sm"><svg><use href="#texto"/></svg>Texto modelado</button>
        <button class="sm"><svg><use href="#linea"/></svg>Línea de modelo</button>
        <button class="sm"><svg><use href="#grupo"/></svg>Grupo de modelo<svg class="t"><use href="#tri"/></svg></button>
      </div></div>
      <div class="caption">Modelo</div>
    </div>
    <div class="panel p-hab">
      <div class="tools">
        <div class="col w129">
          <button class="sm" disabled><svg><use href="#habit"/></svg>Habitación</button>
          <button class="sm"><svg><use href="#separ"/></svg>Separador &nbsp;de habitación</button>
          <button class="sm"><svg><use href="#etiq"/></svg>Etiquetar &nbsp;habitación<svg class="t"><use href="#tri"/></svg></button>
        </div>
        <div class="col">
          <button class="sm"><svg><use href="#area"/></svg>Área<svg class="t"><use href="#tri"/></svg></button>
          <button class="sm" disabled><svg><use href="#contorno"/></svg>Contorno &nbsp;de área</button>
          <button class="sm"><svg><use href="#etarea"/></svg>Etiquetar &nbsp;área<svg class="t"><use href="#tri"/></svg></button>
        </div>
      </div>
      <div class="caption">Habitación y área <svg class="t"><use href="#tri"/></svg></div>
    </div>
    <div class="panel p-hue">
      <div class="tools">
        <button class="lg w26"><svg><use href="#porcara"/></svg>Por cara</button>
        <button class="lg w38"><svg><use href="#agujero"/></svg>Agujero</button>
        <div class="col">
          <button class="sm"><svg><use href="#hmuro"/></svg>Muro</button>
          <button class="sm"><svg><use href="#hvert"/></svg>Vertical</button>
          <button class="sm"><svg><use href="#buhard"/></svg>Buhardilla</button>
        </div>
      </div>
      <div class="caption">Hueco</div>
    </div>
    <div class="panel p-ref">
      <div class="tools"><div class="col mid">
        <button class="sm" disabled><svg><use href="#nivel"/></svg>Nivel</button>
        <button class="sm" disabled><svg><use href="#rejref"/></svg>Rejilla</button>
      </div></div>
      <div class="caption">Referencia</div>
    </div>
    <div class="panel p-pla">
      <div class="tools">
        <button class="lg w26"><svg><use href="#definir"/></svg>Definir</button>
        <div class="col">
          <button class="sm"><svg><use href="#mostrar"/></svg>Mostrar</button>
          <button class="sm" disabled><svg><use href="#planoref"/></svg>Plano de referencia</button>
          <button class="sm"><svg><use href="#visor"/></svg>Visor</button>
        </div>
      </div>
      <div class="caption">Plano de trabajo</div>
    </div>
  </section>
  <div class="optionbar"></div>

  <main class="work">
    <aside class="side-panels">
      <section class="props">
        <div class="phead"><h2>Propiedades</h2><button aria-label="Cerrar"><svg><use href="#x"/></svg></button></div>
        <button class="typesel"><span class="thumb"><svg><use href="#house"/></svg></span><span class="tname">Vista 3D</span><svg class="t"><use href="#tri"/></svg></button>
        <div class="inst">
          <span class="combo"><select aria-label="Filtro de propiedades"><option>Vista 3D: {3D}</option></select><svg><use href="#chevdn"/></svg></span>
          <button><svg><use href="#edit"/></svg>Editar tipo</button>
        </div>
        <div class="gridwrap">
          <div class="gridbox">
            <table class="grid">
              <colgroup><col class="c1"><col class="c2"><col class="c3"></colgroup>
              <tr class="ro"><td>Posición de cámara</td><td>Ajustando</td><td></td></tr>
              <tr class="gh"><th colspan="2">Datos de identidad</th><th><svg><use href="#dbl"/></svg></th></tr>
              <tr><td>Plantilla de vista</td><td class="cellbtn"><button>&lt;Ninguno&gt;</button></td><td></td></tr>
              <tr><td>Nombre de vista</td><td>{3D}</td><td></td></tr>
              <tr class="ro"><td>Dependencia</td><td>Independiente</td><td></td></tr>
              <tr><td>Título en plano</td><td></td><td></td></tr>
              <tr class="gh"><th colspan="2">Proceso por fases</th><th><svg><use href="#dbl"/></svg></th></tr>
              <tr><td>Filtro de fases</td><td>Mostrar todo</td><td></td></tr>
              <tr><td>Fase</td><td>Nueva construcción</td><td></td></tr>
            </table>
          </div>
          <div class="vscroll props-scroll"><svg><use href="#up"/></svg><i class="thumb-bar"></i><svg><use href="#down"/></svg></div>
        </div>
        <div class="pfoot"><a href="#ayuda">Ayuda de propiedades</a><button disabled>Aplicar</button></div>
      </section>
      <section class="browser">
        <div class="phead"><h2>Navegador de proyectos - examen</h2><button aria-label="Cerrar"><svg><use href="#x"/></svg></button></div>
        <div class="treewrap">
          <ul class="tree">
            <li class="l0"><i class="bx">−</i><svg><use href="#views"/></svg>Vistas (todo)</li>
            <li class="l1"><i class="bx">+</i>Planos estructurales</li>
            <li class="l1"><i class="bx">−</i>Planos de planta</li>
            <li class="l2"><span class="hl">Nivel 1</span></li>
            <li class="l2"><span>Nivel 2</span></li>
            <li class="l2"><span>Nivel 3</span></li>
            <li class="l2 last"><span>Planimetría general</span></li>
            <li class="l1"><i class="bx">+</i>Planos de techo</li>
            <li class="l1"><i class="bx">+</i>Vistas 3D</li>
            <li class="l1 end"><i class="bx">−</i>Alzados (Alzado 1)</li>
            <li class="l2 deep"><span>Este</span></li>
            <li class="l2 deep"><span>Norte</span></li>
            <li class="l2 deep"><span>Oeste</span></li>
            <li class="l2 deep last"><span>Sur</span></li>
            <li class="l0 nobx"><i class="bx"></i><svg><use href="#leyenda"/></svg>Leyendas</li>
            <li class="l0"><i class="bx">+</i><svg><use href="#tabla"/></svg>Tablas de planificación/Cantidades (todo)</li>
            <li class="l0 nobx"><i class="bx"></i><svg><use href="#plano"/></svg>Planos (todo)</li>
          </ul>
          <div class="vscroll tree-scroll"><svg><use href="#up"/></svg><i class="thumb-bar"></i><svg><use href="#down"/></svg></div>
        </div>
      </section>
    </aside>

    <section class="view">
      <div class="doctabs">
        <button><svg><use href="#planview"/></svg>Nivel 3</button>
        <button><svg><use href="#planview"/></svg>Nivel 2</button>
        <button class="on"><svg><use href="#house"/></svg>{3D}<svg class="cl"><use href="#x"/></svg></button>
        <button><svg><use href="#planview"/></svg>Nivel 1</button>
        <svg class="more"><use href="#custom"/></svg>
      </div>
      <div class="canvasrow">
        <div class="canvas">
          <svg class="scene" viewBox="231 155 1036 498" role="img" aria-label="Modelo 3D de la casa">
            <defs>
              <pattern id="tl" width="8" height="7" patternUnits="userSpaceOnUse" patternTransform="matrix(1 .26 -.45 .8 395 273)"><path d="M0 0h8v7H0z" fill="#8b795f"/><path d="M0 0H8M0 3.500H8M2 0V3.500M6 3.500V7" stroke="#5b4d36" stroke-width=".6"/></pattern>
              <pattern id="tr" width="9" height="7" patternUnits="userSpaceOnUse" patternTransform="matrix(1 -.32 .5 .9 583 321)"><path d="M0 0h9v7H0z" fill="#b8a484"/><path d="M0 0H9M0 3.500H9M2 0V3.500M6.500 3.500V7" stroke="#776649" stroke-width=".7"/></pattern>
              <pattern id="bars" width="5" height="60" patternUnits="userSpaceOnUse"><path d="M1 0h1.600v60H1z" fill="#1c1c1c"/></pattern>
              <pattern id="bars2" width="4" height="60" patternUnits="userSpaceOnUse"><path d="M1 0h1.700v60H1z" fill="#2a1608"/></pattern>
              <linearGradient id="cf" x2="1" y2="1"><stop stop-color="#fafafa"/><stop offset="1" stop-color="#d8d8d8"/></linearGradient>
            </defs>
            <g fill="none" stroke="#222" stroke-width="1.200" stroke-dasharray="1.500 10 14.500 12">
              <path d="M236 206L380 156"/><path d="M236 297L650 156"/><path d="M1266 202L1094 156" stroke-dasharray="9 13 1.500 12 16 13 1.500 12 16 13 1.500 12 16 13 1.500 12 16 60"/>
            </g>
            <g stroke="#111" stroke-width="1" stroke-linejoin="round">
              <path d="M332 394L395 373V409z" fill="#e0e0e0"/><path d="M338 394L395 376" fill="none"/>
              <path d="M583 333L676 303V340L643 349V473L583 458z" fill="#e0e0e0"/>
              <path d="M675 303L720 314V328L675 330z" fill="#4b4b4b"/>
              <path d="M395 286L583 333V458L643 473V349L725 368V460L827 486V577L332 451V394L395 409z" fill="#4b4b4b"/>
              <path d="M338 453V463L827 588V577z" fill="#505050"/>
              <path d="M395 376L583 424M643 440L725 460" fill="none"/>
              <path d="M583 424L643 405M587 423V432L643 414" fill="none"/>
              <path d="M334 393L395 408M583 457L643 472" fill="none" stroke="#eee"/>
              <path d="M395 273L583 321V333L395 286z" fill="#352c24"/>
              <path d="M583 321L676 291V303L583 333z" fill="#8f7d64"/>
              <path d="M395 273L572 201L583 321z" fill="url(#tl)"/>
              <path d="M572 201L594 193L764 256L676 291L583 321z" fill="url(#tr)"/>
              <path d="M725 368L911 306V400L820 430L725 460z" fill="#e0e0e0"/>
              <path d="M675 291L740 306V319L675 303z" fill="#352c24"/>
              <path d="M675 291L777 249L809 258L816 326L738 299L722 304z" fill="url(#tl)"/>
              <path d="M809 258L911 294L816 326z" fill="url(#tr)"/>
              <path d="M816 326L911 294V306L816 338z" fill="#8f7d64"/>
              <path d="M643 337L719 306L725 357z" fill="url(#tl)"/>
              <path d="M719 306L740 299L816 326L725 357z" fill="url(#tr)"/>
              <path d="M643 337L725 357V368L643 349z" fill="#352c24"/>
              <path d="M725 357L816 326V338L725 368z" fill="#8f7d64"/>
              <!-- courtyard -->
              <path d="M725 460L820 429V485L805 481z" fill="#e0e0e0"/>
              <path d="M730 460L780 443L790 446L746 462z" fill="#fafafa" stroke="none"/><path d="M725 460L820 429M746 463L820 438" fill="none"/>
              <path d="M820 429L920 453L905 459L853 475L820 466z" fill="#4b4b4b"/>
              <path d="M820 430L918 453L905 458L820 437z" fill="#757575"/>
              <path d="M820 466L852 475L827 485L820 483z" fill="#c98348"/>
              <path d="M793 475L811 468V481z" fill="#2f5f7c"/><path d="M810 468V480" stroke-width="2"/>
              <!-- terrace -->
              <path d="M820 428L911 397L1011 424L920 453z" fill="#cf8549"/>
              <path d="M911 367L1014 394V424L911 397z" fill="#ececec" stroke="none"/>
              <path d="M911 367L1014 394V424L911 397z" fill="url(#bars)"/>
              <path d="M820 400L923 425L918 453L820 428z" fill="url(#bars)"/>
              <path d="M923 425L1014 394V424L918 453z" fill="url(#bars2)"/>
              <path d="M911 368L1014 395L923 426L820 401" fill="none" stroke-width="3"/><path d="M911 368L1014 395L923 426L820 401" fill="none" stroke="#bbb"/>
              <path d="M911 398L958 410" fill="none" stroke="#eee" stroke-width="2"/>
              <path d="M911 306V397M820 400V483" fill="none"/>
              <path d="M827 487L1014 423V515L827 577z" fill="#dadada"/>
              <path d="M827 577L1007 517V527L827 588z" fill="#fff"/>
              <path d="M725 460L827 486L1014 423" fill="none" stroke-width="3"/><path d="M727 460L827 486L1012 424" fill="none" stroke="#f4f4f4" stroke-width="1.500"/>
              <path d="M827 487V588" fill="none"/>
              <!-- openings -->
              <path d="M608 352L635 343V382L608 391z" fill="#2f5f7c"/><path d="M608 359L630 365L630 380L608 388z" fill="#a7946f"/><path d="M633 344V383L608 391" fill="none" stroke-width="3"/>
              <path d="M608 443L634 435V470L608 463z" fill="#958467"/><path d="M633 435V470" fill="none" stroke-width="3"/>
              <path d="M743 390L769 382V419L743 429z" fill="#2f5f7c"/><path d="M745 391L755 388V423L745 427z" fill="#3c6472"/><path d="M768 382V419L742 428M756 387V422" fill="none" stroke-width="2"/>
              <path d="M820 364L846 356V392L820 400z" fill="#2f5f7c"/><path d="M820 377L842 384V392L820 399z" fill="#a7946f"/><path d="M845 356V393L824 400" fill="none" stroke-width="2"/>
              <path d="M867 344L892 335V402L867 411z" fill="#8a5a34"/><path d="M870 345L889 338V403L870 409z" fill="#cf8549"/><path d="M885 373h5" stroke-width="2"/>
              <path d="M838 498L865 488V538L838 547z" fill="#222"/><path d="M840 505L848 502V540L840 543z" fill="#d29a66"/><path d="M852 500L861 497V535L852 538z" fill="#d29a66"/>
              <path d="M837 496L866 487V494L838 503z" fill="#555"/><path d="M836 547L863 538L870 541L845 550z" fill="#444"/>
              <path d="M885 491L908 483V549L885 557z" fill="#fff"/><path d="M907 484V549" stroke-width="3"/><path d="M888 492V555M898 489V552M888 497L898 494M888 503L898 500M888 509L898 506M888 515L898 512M888 521L898 518M888 527L898 524M888 533L898 530M888 539L898 536M888 545L898 542M888 551L898 548" fill="none"/><path d="M901 510V528" stroke-width="2"/>
              <path d="M938 478L990 459V520L938 538z" fill="#fbfaf0"/><path d="M987 461L991 459V520L987 522z" fill="#444"/><path d="M938 485L987 468M938 494L987 477M938 503L987 486M938 512L987 495M938 521L987 504M938 530L987 513" fill="none"/>
            </g>
            <g fill="#f6f6f6" stroke="#aaa" stroke-width=".8">
              <ellipse cx="1203" cy="240" rx="46" ry="17" stroke-dasharray="5 2"/><ellipse cx="1203" cy="239" rx="34" ry="11" fill="#fff" stroke-dasharray="5 2"/>
              <ellipse cx="1204" cy="240" rx="28" ry="6" fill="#ddd" stroke="none"/>
              <path d="M1168 248l6-2 5 3-6 4zM1234 248l6-2 6 3-6 2z" fill="#fff"/>
              <path d="M1179 203L1205 208V243L1180 234z" fill="url(#cf)" stroke="#777"/><path d="M1205 208L1227 202L1226 234L1205 243z" fill="url(#cf)" stroke="#777"/><path d="M1179 203L1203 197L1227 202L1205 208z" fill="#fcfcfc" stroke="#777"/>
            </g>
            <g class="cubetext"><text x="1181" y="221" transform="rotate(11 1181 221)">IZQUIERDA</text><text x="1207" y="228" transform="rotate(-13 1207 228)">FRONTAL</text></g>
          </svg>
          <div class="navbar">
            <i class="dot"></i>
            <svg viewBox="0 0 20 20"><path d="M10 2h8v8a8 8 0 1 1-8-8z" fill="#eee" stroke="#999"/><circle cx="10" cy="10" r="5.500" fill="#fff" stroke="#999"/><circle cx="10" cy="10" r="3" fill="#eee" stroke="#999"/><path d="M7 13l-3 3M13 13l3 3" stroke="#999"/></svg>
            <svg class="t"><use href="#tri"/></svg>
            <hr>
            <svg viewBox="0 0 20 20"><path d="M4 3h11v3H4zM4 7h11v2H4zM4 10h6v3H4z" fill="#9ccf8a" stroke="#79ad68" stroke-width=".5"/><circle cx="13" cy="12" r="3" fill="#eee" stroke="#888"/><path d="M15 14l3 3" stroke="#888" stroke-width="1.500"/></svg>
            <svg class="t"><use href="#tri"/></svg>
            <i class="dot"></i>
          </div>
        </div>
        <div class="vscroll view-scroll"><svg><use href="#up"/></svg><i class="thumb-bar"></i><svg><use href="#down"/></svg></div>
      </div>
      <div class="viewbar">
        <span class="scale">1 : 100</span>
        <button aria-label="Nivel de detalle"><svg><use href="#detail"/></svg></button><button aria-label="Estilo visual"><svg><use href="#style"/></svg></button><button aria-label="Sol"><svg><use href="#sun"/></svg></button><button aria-label="Sombras"><svg><use href="#shadow"/></svg></button><button aria-label="Render"><svg><use href="#render"/></svg></button><button aria-label="Recortar"><svg><use href="#crop"/></svg></button><button aria-label="Región de recorte"><svg><use href="#cropb"/></svg></button><button aria-label="Bloquear vista"><svg><use href="#lock"/></svg></button><button aria-label="Ocultar"><svg><use href="#glasses"/></svg></button><button aria-label="Mostrar ocultos"><svg><use href="#bulb"/></svg></button><button aria-label="Propiedades temporales"><svg><use href="#tempv"/></svg></button><button aria-label="Modelo analítico"><svg><use href="#analytic"/></svg></button><button aria-label="Desplazamiento"><svg><use href="#displace"/></svg></button><button aria-label="Restricciones"><svg><use href="#constr"/></svg></button><button aria-label="Izquierda"><svg><use href="#left"/></svg></button>
        <div class="hscroll"><i></i></div>
        <svg class="arr"><use href="#right"/></svg>
      </div>
    </section>
  </main>

  <footer class="status">
    <span class="hint">Clic para seleccionar, TAB para alternar, CTRL para añadir y MAYÚS para anular una selección.</span>
    <svg><use href="#works"/></svg>
    <span class="combo"><select aria-label="Subproyecto" disabled><option></option></select><svg><use href="#chevdn"/></svg></span>
    <span class="cnt"><svg><use href="#pick"/></svg>:0</span>
    <svg class="opt"><use href="#opts"/></svg>
    <svg><use href="#addset"/></svg>
    <span class="combo"><select aria-label="Opción de diseño" disabled><option>Modelo base</option></select><svg><use href="#chevdn"/></svg></span>
    <div class="selopts">
      <svg><use href="#sel1"/></svg><svg><use href="#sel2"/></svg><svg><use href="#sel3"/></svg><svg><use href="#sel4"/></svg><svg><use href="#sel5"/></svg><svg><use href="#gear"/></svg><span><svg><use href="#funnel"/></svg>:0</span>
    </div>
  </footer>

  <div class="taskbar">
    <button class="start" aria-label="Inicio"><svg><use href="#win"/></svg></button>
    <label class="tsearch"><svg><use href="#lupa"/></svg><input type="text" aria-label="Buscar en Windows" placeholder="Escribe aquí para buscar"></label>
    <button class="app-i small" aria-label="Vista de tareas"><svg><use href="#taskview"/></svg></button>
    <button class="app-i" aria-label="Edge"><svg><use href="#edge"/></svg></button>
    <button class="app-i run" aria-label="Explorador"><svg><use href="#folder"/></svg></button>
    <button class="app-i" aria-label="Correo"><svg><use href="#mail"/></svg></button>
    <button class="app-i run" aria-label="Chrome"><svg><use href="#chrome"/></svg></button>
    <button class="app-i" aria-label="Excel"><svg><use href="#excel"/></svg></button>
    <button class="app-i run" aria-label="Word"><svg><use href="#word"/></svg></button>
    <button class="app-i" aria-label="PowerPoint"><svg><use href="#ppt"/></svg></button>
    <button class="app-i run" aria-label="AutoCAD"><svg><use href="#acad"/></svg></button>
    <button class="app-i run cur" aria-label="Revit"><svg><use href="#revit"/></svg></button>
    <button class="app-i" aria-label="Autodesk"><svg><use href="#adesk"/></svg></button>
    <button class="app-i" aria-label="Tienda"><svg><use href="#store"/></svg></button>
    <div class="tray">
      <button class="wx"><svg><use href="#weather"/></svg><span>25°C</span><span>Chubascos</span></button>
      <svg><use href="#chev"/></svg><svg><use href="#meet"/></svg><svg><use href="#net"/></svg><svg><use href="#vol"/></svg>
      <div class="clock"><span>11:52 a. m.</span><span>14/09/2021</span></div>
      <button class="notif" aria-label="Notificaciones"><svg><use href="#notif"/></svg></button>
    </div>
  </div>
</div>
</body>
</html>
```
FILE: styles.css
```css
* { box-sizing: border-box; }
html, body { height: 100%; margin: 0; }
body { font-family: "Open Sans", "Noto Sans", sans-serif; font-size: 9px; line-height: 12px; color: #111; background: #fff; overflow: hidden; }
button, input, select { font: inherit; color: inherit; margin: 0; padding: 0; border: 0; background: none; border-radius: 0; }
svg { display: block; flex: none; }
i { font-style: normal; }
h1, h2 { margin: 0; font: inherit; }
.sprites { position: absolute; width: 0; height: 0; }
.t { width: 6px; height: 6px; }

/* Drop-down with its arrow laid over the right end */
.combo { position: relative; display: block; }
.combo select { appearance: none; width: 100%; height: 100%; display: block; }
.combo svg { position: absolute; right: 1px; top: 3px; width: 10px; height: 10px; pointer-events: none; }

.app { display: flex; flex-direction: column; height: 100vh; }

/* Title bar */
.titlebar { display: flex; align-items: center; height: 20px; background: #cbcbcb; flex: none; }
.qat, .infocenter, .winbtns { display: flex; align-items: center; }
.logo { width: 14px; height: 14px; margin: 0 5px 0 3px; }
.q { width: 20px; height: 20px; display: flex; align-items: center; justify-content: center; }
.q svg { width: 14px; height: 14px; }
.q.narrow { width: 14px; }
.qat .t, .infocenter > .t { width: 6px; height: 6px; margin: 0 1px; }
.big-a { font-size: 14px; font-weight: 700; }
.sep { width: 1px; height: 14px; margin: 0 2px; background: #b4b4b4; }
.title { flex: 1; text-align: center; color: #333; padding: 0 3px 4px 0; }
.side { transform: rotate(-90deg); }
.search { width: 144px; height: 16px; border: 1px solid #222; background: #fff; padding: 0 2px; margin-right: 1px; }
.search::placeholder { color: #555; font-style: italic; opacity: 1; }
.infocenter .q { width: 19px; }
.infocenter .sep { margin: 0 4px; }
.account { display: flex; align-items: center; gap: 3px; width: 97px; padding: 0 4px 0 3px; }
.account > svg:first-child { width: 14px; height: 14px; }
.account .t { margin-left: auto; width: 6px; height: 6px; }
.winbtns { margin-left: 10px; }

/* Ribbon tabs */
.tabs { display: flex; height: 19px; padding-top: 3px; background: #cbcbcb; flex: none; align-items: stretch; }
.tabs button { padding: 0 8px; white-space: nowrap; color: #222; }
.tabs .file { width: 47px; padding: 0; margin-right: 3px; background: #1f74b4; color: #fff; }
.tabs .active { background: #eee; width: 67px; padding: 0; color: #111; }
.ribmin { width: 20px; height: 12px; margin: 2px 1px 0 auto; }

/* Ribbon */
.ribbon { display: flex; height: 77px; background: #eee; border-bottom: 1px solid #c8c8c8; flex: none; }
.panel { display: flex; flex-direction: column; border-right: 1px solid #d9d9d9; padding: 3px 0 0 6px; min-width: 0; white-space: nowrap; }
.panel:last-child { border-right: 0; }
.tools { display: flex; height: 57px; }
.caption { display: flex; align-items: center; justify-content: center; gap: 4px; height: 16px; padding-right: 6px; }
.p-sel { flex: 68 1 68px; } .p-con { flex: 424 1 424px; } .p-cir { flex: 80 1 80px; } .p-mod { flex: 112 1 112px; }
.p-hab { flex: 234 1 234px; } .p-hue { flex: 140 1 140px; } .p-ref { flex: 55 1 55px; } .p-pla { flex: 167 1 167px; }
.p-sel { padding-left: 0; padding-right: 0; }
.p-sel .caption { gap: 6px; padding-right: 0; }
.p-sel .tools { justify-content: center; }
.lg { display: flex; flex-direction: column; align-items: center; white-space: normal; padding-top: 3px; }
.lg > svg { width: 24px; height: 24px; margin-bottom: 3px; }
.lg > .t { width: 6px; height: 6px; margin: 1px 0 0; }
.selected { width: 46px; background: linear-gradient(#b9d8f5, #a5cdf3); border: 1px solid #3a85cc; padding-top: 2px; margin-left: 2px; }
.w26 { width: 26px; } .w34 { width: 34px; } .w36 { width: 36px; } .w38 { width: 38px; } .w70 { width: 70px; } .w76 { width: 76px; } .w129 { width: 129px; }
.col { display: flex; flex-direction: column; }
.p-con .w70 { margin-left: 4px; }
.p-hue .col, .p-pla .col { margin-left: 5px; }
.mid { justify-content: center; }
.sm { display: flex; align-items: center; height: 19px; gap: 4px; text-align: left; }
.sm svg { width: 13px; height: 13px; }
.sm .t { width: 6px; height: 6px; margin-left: 2px; }
.sm:disabled { color: #a6a6a6; }
.optionbar { height: 22px; background: #eee; flex: none; }

/* Work area */
.work { flex: 1; display: flex; min-height: 0; border-top: 1px solid #b9b9b9; }
.side-panels { width: 231px; flex: none; display: flex; flex-direction: column; background: #eee; border-right: 2px solid #bcbcbc; }
.phead { display: flex; align-items: center; justify-content: space-between; height: 16px; padding: 0 3px 0 2px; background: #f0f0f0; color: #333; }
.phead button, .phead svg { width: 10px; height: 10px; }
.props { display: flex; flex-direction: column; border-bottom: 2px solid #c2c2c2; height: 267px; flex: none; }
.typesel { display: flex; align-items: center; height: 57px; border: 1px solid #d2d2d2; padding: 0 1px 0 2px; margin-right: 1px; }
.thumb { width: 53px; height: 53px; border: 1px solid #cfcfcf; display: flex; align-items: center; justify-content: center; }
.thumb svg { width: 26px; height: 26px; }
.tname { flex: 1; text-align: left; padding-left: 4px; color: #444; }
.inst { display: flex; align-items: center; height: 19px; padding: 0 5px 0 1px; justify-content: space-between; }
.inst .combo { width: 156px; height: 18px; border: 1px solid #ababab; background: #e3e3e3; }
.inst select { padding: 0 2px; }
.inst button { display: flex; align-items: center; gap: 3px; }
.inst button svg { width: 14px; height: 14px; }
.gridwrap { display: flex; flex: 1; min-height: 0; background: #fff; margin-right: 1px; }
.gridbox { flex: 1; padding-right: 2px; }
.grid { width: 100%; table-layout: fixed; border-collapse: collapse; }
.c1 { width: 103px; } .c3 { width: 9px; }
.grid td { height: 14px; padding: 0 0 0 7px; line-height: 13px; border-bottom: 1px solid #bdbdbd; border-right: 1px solid #bdbdbd; white-space: nowrap; }
.grid td + td { padding-left: 2px; }
.grid th { height: 16px; padding: 0 0 0 2px; background: #dcdcdc; font-weight: 400; text-align: left; line-height: 15px; color: #111; }
.grid th svg { width: 11px; height: 11px; margin-left: -4px; }
.grid .ro { color: #808080; }
.grid .cellbtn { padding: 0 0 0 1px; }
.cellbtn button { display: block; width: 100%; height: 13px; background: #dedede; border: 1px solid #a5a5a5; line-height: 10px; }
.vscroll { display: flex; flex-direction: column; align-items: center; width: 12px; background: #f0f0f0; }
.vscroll svg { width: 11px; height: 11px; }
.thumb-bar { display: block; width: 100%; background: #cdcdcd; }
.props-scroll .thumb-bar { margin-top: auto; height: 38px; }
.pfoot { display: flex; align-items: center; justify-content: space-between; height: 22px; padding: 0 3px 0 2px; }
.pfoot a { color: #1b6ec2; }
.pfoot button { width: 58px; height: 17px; background: #cbcbcb; color: #888; }
.browser { flex: 1; display: flex; flex-direction: column; min-height: 0; }
.browser .phead { height: 15px; flex: none; }
.treewrap { flex: 1; display: flex; min-height: 0; background: #fff; }
.tree { flex: 1; margin: 0; padding: 0 0 3px; list-style: none; display: grid; grid-auto-rows: 1fr; }
.tree li { display: flex; align-items: center; white-space: nowrap; min-height: 0; background: linear-gradient(#ccc, #ccc) 7px 0 / 1px 100% no-repeat; }
.tree svg { width: 13px; height: 13px; margin: 0 5px 0 6px; }
.bx { width: 7px; height: 7px; border: 1px solid #999; background: #fff; font-size: 8px; line-height: 5px; text-align: center; flex: none; color: #225; }
.tree .l0 { padding-left: 4px; }
.tree .nobx .bx { border-color: transparent; background: linear-gradient(#bbb, #bbb) 3px 3px / 6px 1px no-repeat; }
.tree .l1 { padding-left: 20px; background: linear-gradient(#ccc, #ccc) 7px 0 / 1px 100% no-repeat, linear-gradient(#ccc, #ccc) 23px 0 / 1px 100% no-repeat; }
.l1 .bx::after { content: ""; display: block; width: 7px; height: 1px; margin: -3px 0 0 8px; background: #bbb; }
.l1 .bx { margin-right: 11px; }
.tree .l1.end { background: linear-gradient(#ccc, #ccc) 7px 0 / 1px 100% no-repeat, linear-gradient(#ccc, #ccc) 23px 0 / 1px 50% no-repeat; }
.tree .l2 { padding-left: 52px; background: linear-gradient(#ccc, #ccc) 7px 0 / 1px 100% no-repeat, linear-gradient(#ccc, #ccc) 23px 0 / 1px 100% no-repeat, linear-gradient(#ccc, #ccc) 39px 0 / 1px 100% no-repeat, linear-gradient(#bbb, #bbb) 39px 50% / 12px 1px no-repeat; }
.tree .l2.last { background: linear-gradient(#ccc, #ccc) 7px 0 / 1px 100% no-repeat, linear-gradient(#ccc, #ccc) 23px 0 / 1px 100% no-repeat, linear-gradient(#ccc, #ccc) 39px 0 / 1px 50% no-repeat, linear-gradient(#bbb, #bbb) 39px 50% / 12px 1px no-repeat; }
.tree .l2.deep { background: linear-gradient(#ccc, #ccc) 7px 0 / 1px 100% no-repeat, linear-gradient(#ccc, #ccc) 39px 0 / 1px 100% no-repeat, linear-gradient(#bbb, #bbb) 39px 50% / 12px 1px no-repeat; }
.tree .l2.deep.last { background: linear-gradient(#ccc, #ccc) 7px 0 / 1px 100% no-repeat, linear-gradient(#ccc, #ccc) 39px 0 / 1px 50% no-repeat, linear-gradient(#bbb, #bbb) 39px 50% / 12px 1px no-repeat; }
.l2 span { padding: 1px 2px; }
.hl { background: #dfdfdf; }
.tree-scroll { margin-right: 1px; }
.tree-scroll .thumb-bar { flex: 1; margin: 2px 0 34px; }

/* View */
.view { flex: 1; display: flex; flex-direction: column; min-width: 0; }
.doctabs { display: flex; height: 16px; background: #cbcbcb; flex: none; }
.doctabs button { display: flex; align-items: center; gap: 6px; width: 102px; padding-left: 4px; color: #444; }
.doctabs svg { width: 13px; height: 13px; }
.doctabs .on { background: #fff; color: #111; font-weight: 600; }
.doctabs .on .cl { width: 10px; height: 10px; margin: 0 2px 0 auto; }
.doctabs .more { width: 14px; height: 14px; margin: 1px 0 0 auto; }
.canvasrow { flex: 1; display: flex; min-height: 0; background: #fff; }
.canvas { flex: 1; position: relative; min-width: 0; }
.scene { width: 100%; height: 100%; }
.cubetext { font-size: 5px; fill: #888; }
.navbar { position: absolute; top: 121px; right: 1px; width: 28px; height: 94px; border: 1px solid #aaa; border-radius: 4px; background: #f4f4f4; display: flex; flex-direction: column; align-items: center; justify-content: space-between; padding: 1px 0 2px; }
.navbar svg { width: 20px; height: 20px; }
.navbar .t { width: 5px; height: 5px; opacity: .7; }
.navbar hr { width: 22px; height: 1px; margin: 0; border: 0; background: #aaa; }
.dot { width: 6px; height: 6px; border: 1px solid #999; border-radius: 50%; align-self: flex-end; margin-right: 2px; }
.view-scroll { width: 13px; padding: 3px 0; justify-content: space-between; }
.view-scroll .thumb-bar { height: 14px; width: 12px; }
.viewbar { display: flex; align-items: center; height: 15px; background: #f0f0f0; flex: none; margin-bottom: 2px; }
.scale { width: 63px; text-align: center; padding-left: 6px; color: #111; }
.viewbar button { width: 17px; display: flex; justify-content: center; }
.viewbar svg { width: 13px; height: 13px; }
.viewbar button:last-of-type svg, .viewbar .arr { width: 11px; height: 11px; }
.hscroll { flex: 1; display: flex; justify-content: center; height: 12px; padding-right: 8px; }
.hscroll i { width: 14px; background: #cdcdcd; }
.arr { margin-right: 14px; }

/* Status bar */
.status { display: flex; align-items: center; height: 19px; background: #cacaca; padding-left: 1px; flex: none; white-space: nowrap; }
.status svg { width: 14px; height: 14px; }
.hint { width: 463px; }
.status .combo { width: 163px; height: 15px; margin-left: 6px; background: #fff; }
.status .combo svg { width: 10px; height: 10px; opacity: .6; }
.status select { color: #777; opacity: 1; padding: 0 2px; }
.cnt { display: flex; align-items: center; width: 42px; margin-left: 7px; gap: 2px; }
.status .opt { margin-right: 6px; }
.status .opt ~ .combo { margin-left: 7px; }
.selopts { display: flex; align-items: center; gap: 7px; margin-left: auto; padding-right: 50px; }
.selopts span { display: flex; align-items: center; }

/* Windows taskbar */
.taskbar { display: flex; height: 32px; background: #202020; color: #fff; flex: none; font-size: 11px; line-height: 14px; }
.start { width: 39px; display: flex; align-items: center; justify-content: center; }
.start svg { width: 15px; height: 15px; }
.tsearch { width: 274px; display: flex; align-items: center; gap: 9px; padding-left: 9px; background: #f2f2f2; border-bottom: 1px solid #bbb; }
.tsearch svg { width: 13px; height: 13px; }
.tsearch input { flex: 1; min-width: 0; }
.tsearch input::placeholder { color: #444; opacity: 1; }
.app-i { width: 39px; border-bottom: 2px solid transparent; display: flex; align-items: center; justify-content: center; }
.app-i svg { width: 20px; height: 20px; }
.small svg { width: 16px; height: 16px; }
.run { background: linear-gradient(#76b9ed, #76b9ed) 50% 100% / 32px 2px no-repeat border-box; }
.cur { background: linear-gradient(#76b9ed, #76b9ed) 50% 100% / 39px 2px no-repeat border-box, #454545; }
.tray { display: flex; align-items: center; margin-left: auto; gap: 4px; padding-right: 3px; }
.tray svg { width: 15px; height: 15px; }
.wx { display: flex; align-items: center; gap: 6px; margin-right: 6px; }
.wx svg { width: 18px; height: 18px; }
.clock { display: flex; flex-direction: column; font-size: 9px; line-height: 14px; text-align: center; width: 48px; margin-left: 4px; }
.notif { width: 38px; height: 32px; display: flex; align-items: center; justify-content: center; border-right: 1px solid #555; }
.notif svg { width: 20px; height: 20px; }
```
